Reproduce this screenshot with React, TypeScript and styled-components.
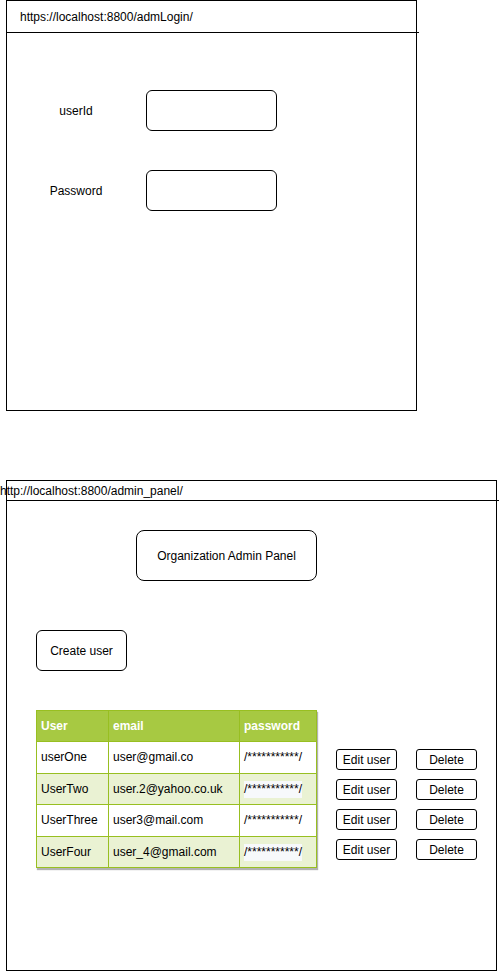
import React from "react";
import styled, { createGlobalStyle } from "styled-components";

const GlobalStyle = createGlobalStyle`
  html, body {
    margin: 0;
    padding: 0;
    background: #ffffff;
  }
  body {
    font-family: "Liberation Sans", Arial, sans-serif;
    font-size: 12px;
    color: #000;
  }
`;

const Page = styled.div`
  padding-left: 6px;
  width: 494px;
  display: flex;
  flex-direction: column;
  gap: 69px;
`;

const Frame = styled.div<{ $w: number; $h: number }>`
  box-sizing: border-box;
  width: ${(p) => p.$w}px;
  height: ${(p) => p.$h}px;
  border: 1px solid #000;
  display: flex;
  flex-direction: column;
`;

const UrlBar = styled.div<{ $h: number; $indent: number }>`
  height: ${(p) => p.$h}px;
  display: flex;
  align-items: center;
  padding-left: ${(p) => p.$indent}px;
  white-space: nowrap;
  font-size: 12px;
`;

const Divider = styled.div`
  height: 1px;
  background: #000;
  margin-left: -1px;
  width: calc(100% + 4px);
`;

const LoginForm = styled.div`
  margin-top: 57px;
  margin-left: 39px;
  display: grid;
  grid-template-columns: 60px 131px;
  column-gap: 40px;
  row-gap: 39px;
  align-items: center;
`;

const Label = styled.div`
  text-align: center;
  font-size: 12px;
`;

const InputBox = styled.div`
  box-sizing: border-box;
  width: 131px;
  height: 41px;
  border: 1px solid #000;
  border-radius: 6px;
  background: #fff;
`;

const PanelBody = styled.div`
  padding-left: 29px;
  display: flex;
  flex-direction: column;
  align-items: flex-start;
`;

const TitleBox = styled.div`
  box-sizing: border-box;
  margin-top: 29px;
  margin-left: 100px;
  width: 181px;
  height: 51px;
  border: 1px solid #000;
  border-radius: 8px;
  display: flex;
  align-items: center;
  justify-content: center;
  font-size: 12px;
`;

const CreateButton = styled.div`
  box-sizing: border-box;
  margin-top: 49px;
  width: 91px;
  height: 41px;
  border: 1px solid #000;
  border-radius: 6px;
  display: flex;
  align-items: center;
  justify-content: center;
  font-size: 12px;
`;

const UsersArea = styled.div`
  margin-top: 39px;
  display: flex;
  align-items: flex-start;
  gap: 19px;
`;

const Table = styled.table`
  border-collapse: collapse;
  width: 280px;
  table-layout: fixed;
  box-shadow: 1px 2px 1px rgba(0, 0, 0, 0.3);
  font-size: 12px;
`;

const Th = styled.th<{ $w: number }>`
  box-sizing: border-box;
  width: ${(p) => p.$w}px;
  height: 31px;
  padding: 0 0 0 4px;
  text-align: left;
  background: #a7c942;
  color: #fff;
  font-weight: bold;
  border: 1px solid #98bf21;
`;

const Td = styled.td<{ $alt: boolean }>`
  box-sizing: border-box;
  height: 31.6px;
  padding: 0 0 0 4px;
  background: ${(p) => (p.$alt ? "#eaf2d3" : "#fff")};
  border: 1px solid #98bf21;
  white-space: nowrap;
  overflow: hidden;
`;

const Masked = styled.span<{ $alt: boolean }>`
  font-size: 12px;
  background: ${(p) => (p.$alt ? "#f7f9fb" : "transparent")};
  padding: 1px 0 2px 0;
`;

const Actions = styled.div`
  margin-top: 39px;
  display: flex;
  flex-direction: column;
  gap: 9px;
`;

const ActionRow = styled.div`
  display: flex;
  gap: 19px;
`;

const SmallButton = styled.div`
  box-sizing: border-box;
  width: 61px;
  height: 21px;
  border: 1px solid #000;
  border-radius: 3px;
  display: flex;
  align-items: center;
  justify-content: center;
  font-size: 12px;
`;

const users = [
  { name: "userOne", email: "user@gmail.co" },
  { name: "UserTwo", email: "user.2@yahoo.co.uk" },
  { name: "UserThree", email: "user3@mail.com" },
  { name: "UserFour", email: "user_4@gmail.com" },
];

const App: React.FC = () => {
  return (
    <>
      <GlobalStyle />
      <Page>
        <Frame $w={411} $h={411}>
          <UrlBar $h={31} $indent={13}>https://localhost:8800/admLogin/</UrlBar>
          <Divider />
          <LoginForm>
            <Label>userId</Label>
            <InputBox />
            <Label>Password</Label>
            <InputBox />
          </LoginForm>
        </Frame>

        <Frame $w={491} $h={491}>
          <UrlBar $h={19} $indent={0} style={{ marginLeft: -7 }}>
            http://localhost:8800/admin_panel/
          </UrlBar>
          <Divider />
          <PanelBody>
            <TitleBox>Organization Admin Panel</TitleBox>
            <CreateButton>Create user</CreateButton>
            <UsersArea>
              <Table>
                <thead>
                  <tr>
                    <Th $w={72}>User</Th>
                    <Th $w={131}>email</Th>
                    <Th $w={77}>password</Th>
                  </tr>
                </thead>
                <tbody>
                  {users.map((u, i) => (
                    <tr key={u.name}>
                      <Td $alt={i % 2 === 1}>{u.name}</Td>
                      <Td $alt={i % 2 === 1}>{u.email}</Td>
                      <Td $alt={i % 2 === 1}>
                        <Masked $alt={i % 2 === 1}>/***********/</Masked>
                      </Td>
                    </tr>
                  ))}
                </tbody>
              </Table>
              <Actions>
                {users.map((u) => (
                  <ActionRow key={u.name}>
                    <SmallButton>Edit user</SmallButton>
                    <SmallButton>Delete</SmallButton>
                  </ActionRow>
                ))}
              </Actions>
            </UsersArea>
          </PanelBody>
        </Frame>
      </Page>
    </>
  );
};

export default App;
